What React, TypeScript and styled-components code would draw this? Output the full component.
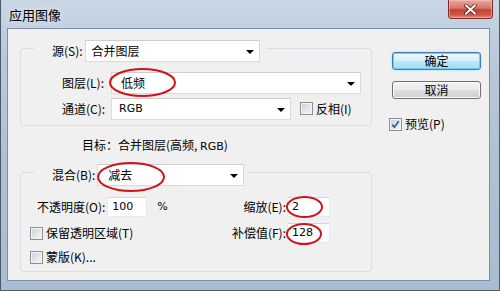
import React from "react";
import styled, { createGlobalStyle } from "styled-components";

const UI_FONT = `"Noto Sans CJK SC", "Liberation Sans", sans-serif`;

const GlobalStyle = createGlobalStyle`
  html, body {
    margin: 0;
    padding: 0;
    background: #ffffff;
  }
  body {
    font-family: ${UI_FONT};
  }
`;

const Window = styled.div`
  width: 500px;
  height: 291px;
  box-sizing: border-box;
  display: flex;
  flex-direction: column;
  padding: 0 9px 9px 6px;
  border: 1px solid #4d5a69;
  border-top: none;
  background: linear-gradient(180deg, #c9d6e4 0%, #b9c9db 20%, #adc0d4 60%, #a9bcd1 100%);
  font-family: ${UI_FONT};
  font-size: 12px;
  line-height: 16px;
  color: #000;
  overflow: hidden;
`;

const TitleBar = styled.div`
  height: 28px;
  flex: none;
  display: flex;
  align-items: flex-start;
  justify-content: space-between;
`;

const Title = styled.div`
  padding: 7px 0 0 2px;
  font-size: 13px;
  line-height: 16px;
  color: #000;
  text-shadow: 0 0 8px rgba(255, 255, 255, 0.9);
`;

const CloseButton = styled.div`
  width: 45px;
  height: 19px;
  margin-right: -3px;
  box-sizing: border-box;
  border: 1px solid #7a2b25;
  border-top: none;
  border-radius: 0 0 4px 4px;
  background: linear-gradient(180deg, #e8a89e 0%, #d8766a 45%, #c4402f 55%, #cf5d4c 85%, #e3907f 100%);
  box-shadow: inset 0 0 0 1px rgba(255, 210, 200, 0.45);
  display: flex;
  align-items: center;
  justify-content: center;
`;

const Client = styled.div`
  flex: 1;
  display: flex;
  align-items: flex-start;
  padding: 11px 0 0 12px;
  border: 1px solid #7f8fa3;
  background: #f0f0f0;
`;

const LeftColumn = styled.div`
  width: 352px;
  display: flex;
  flex-direction: column;
`;

const RightColumn = styled.div`
  display: flex;
  flex-direction: column;
  align-items: flex-start;
  margin: 12px 0 0 20px;
`;

const Group = styled.fieldset`
  margin: 0;
  padding: 0;
  min-width: 0;
  border: 1px solid #d5dfe5;
  border-radius: 3px;
`;

const Legend = styled.legend<{ $right: number }>`
  margin-left: 13px;
  padding: 0 ${(p) => p.$right}px 0 18px;
  height: 17px;
  display: flex;
  align-items: flex-start;
  gap: 2px;
  line-height: 22px;
`;

const LegendLabel = styled.span`
  white-space: nowrap;
`;

const SourceBody = styled.div`
  display: grid;
  grid-template-columns: 49px auto;
  grid-auto-rows: 21px;
  row-gap: 5px;
  align-items: center;
  padding: 15px 8px 6px 41px;
`;

const BlendBody = styled.div`
  display: grid;
  grid-template-columns: 1fr auto;
  grid-template-rows: 20px 20px 16px;
  row-gap: 6px;
  align-items: center;
  padding: 16px 41px 6px 9px;
`;

const Cell = styled.div<{ $indent?: number; $gap?: number }>`
  display: flex;
  align-items: center;
  gap: ${(p) => p.$gap ?? 0}px;
  padding-left: ${(p) => p.$indent ?? 0}px;
  white-space: nowrap;
`;

const RightCell = styled(Cell)`
  justify-content: flex-end;
`;

const Select = styled.div<{ $w: number; $pad?: number }>`
  position: relative;
  width: ${(p) => p.$w}px;
  height: 22px;
  box-sizing: border-box;
  flex: none;
  display: flex;
  align-items: center;
  padding-left: ${(p) => p.$pad ?? 6}px;
  background: #ffffff;
  border: 1px solid #dadada;
  border-top-color: #cfcfcf;
  line-height: 16px;

  &::after {
    content: "";
    position: absolute;
    right: 5px;
    top: 9px;
    border-left: 4px solid transparent;
    border-right: 4px solid transparent;
    border-top: 4px solid #000;
  }
`;

const TextBox = styled.div<{ $w: number; $h?: number }>`
  position: relative;
  width: ${(p) => p.$w}px;
  height: ${(p) => p.$h ?? 20}px;
  box-sizing: border-box;
  display: flex;
  align-items: center;
  padding-left: 4px;
  background: #ffffff;
  border: 1px solid #e6e8ec;
  border-top-color: #d4d6da;
  font-family: "DejaVu Sans", sans-serif;
  font-size: 11px;
`;

const Latin = styled.span`
  font-family: "DejaVu Sans", sans-serif;
  font-size: 11px;
`;

const Target = styled.div`
  margin: 11px 0 9px 62px;
  line-height: 16px;
  white-space: nowrap;
`;

const Box = styled.span<{ $checked?: boolean }>`
  width: 13px;
  height: 13px;
  box-sizing: border-box;
  flex: none;
  display: inline-flex;
  align-items: center;
  justify-content: center;
  border: 1px solid #8f8f8f;
  background: linear-gradient(135deg, #c9cdd2 0%, #e6e7e9 55%, #f7f7f7 100%);
  box-shadow: inset 0 0 0 1px #f3f3f3;
`;

const CheckLabel = styled.label<{ $gap?: number }>`
  display: inline-flex;
  align-items: center;
  gap: ${(p) => p.$gap ?? 3}px;
  white-space: nowrap;
`;

const Button = styled.div<{ $primary?: boolean }>`
  width: 89px;
  height: 18px;
  box-sizing: border-box;
  display: flex;
  align-items: center;
  justify-content: center;
  border-radius: 3px;
  border: 1px solid ${(p) => (p.$primary ? "#3c7fb1" : "#707070")};
  background: ${(p) =>
    p.$primary
      ? "linear-gradient(180deg, #eaf7fd 0%, #d6f0fb 48%, #bde6f8 52%, #a6dbf3 100%)"
      : "linear-gradient(180deg, #f3f3f3 0%, #ebebeb 48%, #dddddd 52%, #cfcfcf 100%)"};
  box-shadow: ${(p) =>
    p.$primary
      ? "inset 0 0 0 1px #67d0f5, 0 0 2px #8fd8f5"
      : "inset 0 0 0 1px #fbfbfb"};
  line-height: 16px;
  margin-bottom: 11px;
`;

const Preview = styled(CheckLabel)`
  margin: 6px 0 0 -3px;
`;

const Mark = styled.svg<{ $x: number; $y: number; $w: number; $h: number }>`
  position: absolute;
  left: ${(p) => p.$x}px;
  top: ${(p) => p.$y}px;
  width: ${(p) => p.$w}px;
  height: ${(p) => p.$h}px;
  overflow: visible;
  pointer-events: none;
`;

function RedMark({ x, y, w, h }: { x: number; y: number; w: number; h: number }) {
  return (
    <Mark $x={x} $y={y} $w={w} $h={h} viewBox={`0 0 ${w} ${h}`}>
      <ellipse
        cx={w / 2}
        cy={h / 2}
        rx={w / 2 - 1}
        ry={h / 2 - 1}
        fill="none"
        stroke="#d0141c"
        strokeWidth="2"
      />
    </Mark>
  );
}

function CheckBox({ checked }: { checked?: boolean }) {
  return (
    <Box $checked={checked}>
      {checked && (
        <svg width="9" height="9" viewBox="0 0 9 9">
          <path d="M1.2 4.6 L3.4 7.2 L7.8 1.2" fill="none" stroke="#2a5aa8" strokeWidth="1.7" />
        </svg>
      )}
    </Box>
  );
}

function CloseGlyph() {
  return (
    <svg width="13" height="11" viewBox="0 0 13 11">
      <path d="M2 1.5 L11 9.5 M11 1.5 L2 9.5" stroke="#5a1b16" strokeWidth="3.6" strokeLinecap="square" />
      <path d="M2 1.5 L11 9.5 M11 1.5 L2 9.5" stroke="#ffffff" strokeWidth="2" strokeLinecap="square" />
    </svg>
  );
}

export default function App() {
  return (
    <>
      <GlobalStyle />
      <Window>
        <TitleBar>
          <Title>应用图像</Title>
          <CloseButton>
            <CloseGlyph />
          </CloseButton>
        </TitleBar>
        <Client>
          <LeftColumn>
            <Group>
              <Legend $right={6}>
                <LegendLabel>源(S):</LegendLabel>
                <Select $w={175}>合并图层</Select>
              </Legend>
              <SourceBody>
                <span>图层(L):</span>
                <Select $w={250} $pad={9}>
                  低频
                  <RedMark x={-3} y={-5} w={67} h={29} />
                </Select>
                <span>通道(C):</span>
                <Cell $gap={9}>
                  <Select $w={180} $pad={7}>
                    <Latin>RGB</Latin>
                  </Select>
                  <CheckLabel>
                    <CheckBox />
                    反相(I)
                  </CheckLabel>
                </Cell>
              </SourceBody>
            </Group>

            <Target>
              目标：合并图层(高频, <Latin>RGB</Latin>)
            </Target>

            <Group>
              <Legend $right={5}>
                <LegendLabel>混合(B):</LegendLabel>
                <Select $w={147} $pad={10}>
                  减去
                  <RedMark x={-1} y={-3} w={68} h={30} />
                </Select>
              </Legend>
              <BlendBody>
                <Cell $indent={7} $gap={2}>
                  不透明度(O):
                  <TextBox $w={40}>100</TextBox>
                  <Latin style={{ marginLeft: 8 }}>%</Latin>
                </Cell>
                <RightCell $gap={1}>
                  缩放(E):
                  <TextBox $w={43}>
                    2
                    <RedMark x={-2} y={-2} w={37} h={22} />
                  </TextBox>
                </RightCell>
                <Cell>
                  <CheckLabel>
                    <CheckBox />
                    保留透明区域(T)
                  </CheckLabel>
                </Cell>
                <RightCell $gap={1}>
                  补偿值(F):
                  <TextBox $w={43}>
                    128
                    <RedMark x={-2} y={-1} w={36} h={22} />
                  </TextBox>
                </RightCell>
                <Cell>
                  <CheckLabel>
                    <CheckBox />
                    蒙版(K)...
                  </CheckLabel>
                </Cell>
              </BlendBody>
            </Group>
          </LeftColumn>

          <RightColumn>
            <Button $primary>确定</Button>
            <Button>取消</Button>
            <Preview>
              <CheckBox checked />
              预览(P)
            </Preview>
          </RightColumn>
        </Client>
      </Window>
    </>
  );
}
